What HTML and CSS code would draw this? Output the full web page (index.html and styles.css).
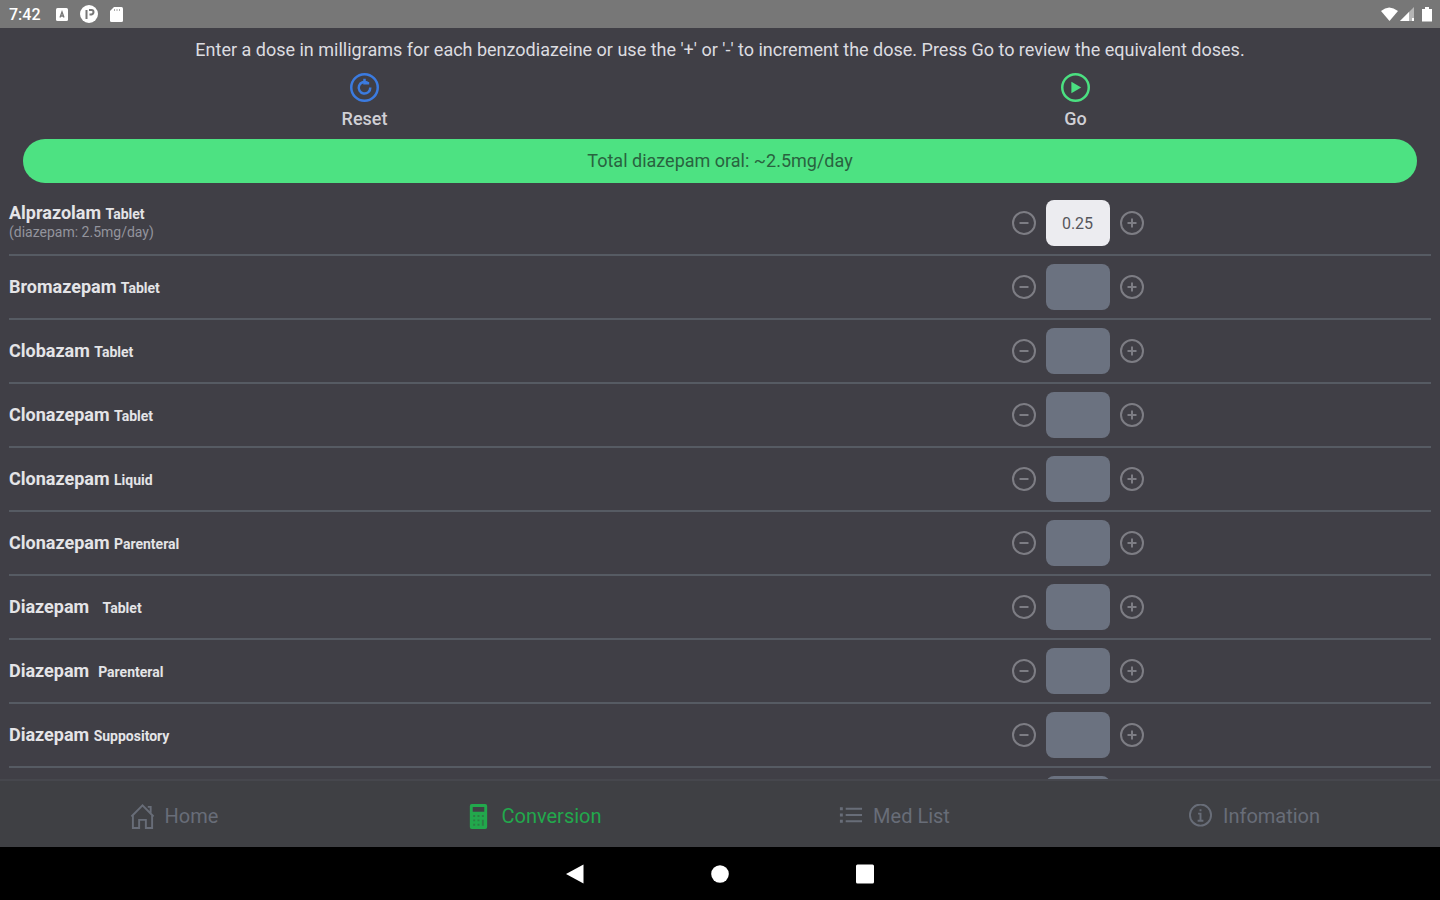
FILE: index.html
```html
<!DOCTYPE html>
<html lang="en">
<head>
<meta charset="utf-8">
<title>Benzodiazepine Conversion</title>
<link rel="stylesheet" href="styles.css">
</head>
<body>
<svg class="defs" aria-hidden="true">
  <symbol id="minus" viewBox="0 0 24 24"><circle cx="12" cy="12" r="11"/><path d="M7.500 12h9"/></symbol>
  <symbol id="plus" viewBox="0 0 24 24"><circle cx="12" cy="12" r="11"/><path d="M7.500 12h9M12 7.500v9"/></symbol>
</svg>
<header class="status">
  <span class="clock">7:42</span>
  <svg class="status-icon" viewBox="0 0 18 18"><rect x="3" y="3" width="12" height="13" rx="1.500" fill="#fff"/><path d="M7 12.500 9 7l2 5.500M7.500 11h3" fill="none" stroke="#777" stroke-width="1.300"/></svg>
  <svg class="status-icon" viewBox="0 0 18 18"><circle cx="9" cy="9" r="9" fill="#fff"/><path d="M6.500 14V5M9 5h2.500q2 0 2 2t-2 2.500H9.500" fill="none" stroke="#777" stroke-width="2"/></svg>
  <svg class="status-icon" viewBox="0 0 18 18"><path d="M7 2h7.500a1.500 1.500 0 0 1 1.500 1.500v12a1.500 1.500 0 0 1-1.500 1.500h-10A1.500 1.500 0 0 1 3 15.500V6z" fill="#fff"/><path d="M7.500 4v2M10 4v2M12.500 4v2" stroke="#aaa"/></svg>
  <svg class="signals" viewBox="0 0 54 18"><path d="M1 6q8-7 17 0l-8.500 10z" fill="#fff"/><path d="M20 16 34 2v14z" fill="#b5b5b5"/><path d="M20 16l9-9v9zM32 13h2v3h-2z" fill="#fff"/><path d="M42 4h3V2h4v2h3v12.500H42z" fill="#fff"/></svg>
</header>
<main class="content">
  <p class="intro">Enter a dose in milligrams for each benzodiazeine or use the '+' or '-' to increment the dose. Press Go to review the equivalent doses.</p>
  <div class="actions">
    <button class="action" type="button">
      <svg class="reset-icon" viewBox="0 0 28 28"><circle cx="14" cy="14" r="12.800"/><path d="M17 9.500A5.600 5.600 0 1 0 19.600 14"/><path d="M14 5.500v4.500h4.500" /></svg>
      <span>Reset</span>
    </button>
    <button class="action" type="button">
      <svg class="go-icon" viewBox="0 0 28 28"><circle cx="14" cy="14" r="12.800"/><path d="M10 8.500v11l9.500-5.500z"/></svg>
      <span>Go</span>
    </button>
  </div>
  <div class="total">Total diazepam oral: ~2.5mg/day</div>
  <ul class="meds">
    <li class="med"><label class="name" for="m1">Alprazolam <small>Tablet</small><span class="equiv">(diazepam: 2.5mg/day)</span></label><div class="dose"><button class="step" type="button" aria-label="Decrease"><svg><use href="#minus"/></svg></button><input class="amount filled" id="m1" value="0.25"><button class="step" type="button" aria-label="Increase"><svg><use href="#plus"/></svg></button></div></li>
    <li class="med"><label class="name" for="m2">Bromazepam <small>Tablet</small></label><div class="dose"><button class="step" type="button" aria-label="Decrease"><svg><use href="#minus"/></svg></button><input class="amount" id="m2"><button class="step" type="button" aria-label="Increase"><svg><use href="#plus"/></svg></button></div></li>
    <li class="med"><label class="name" for="m3">Clobazam <small>Tablet</small></label><div class="dose"><button class="step" type="button" aria-label="Decrease"><svg><use href="#minus"/></svg></button><input class="amount" id="m3"><button class="step" type="button" aria-label="Increase"><svg><use href="#plus"/></svg></button></div></li>
    <li class="med"><label class="name" for="m4">Clonazepam <small>Tablet</small></label><div class="dose"><button class="step" type="button" aria-label="Decrease"><svg><use href="#minus"/></svg></button><input class="amount" id="m4"><button class="step" type="button" aria-label="Increase"><svg><use href="#plus"/></svg></button></div></li>
    <li class="med"><label class="name" for="m5">Clonazepam <small>Liquid</small></label><div class="dose"><button class="step" type="button" aria-label="Decrease"><svg><use href="#minus"/></svg></button><input class="amount" id="m5"><button class="step" type="button" aria-label="Increase"><svg><use href="#plus"/></svg></button></div></li>
    <li class="med"><label class="name" for="m6">Clonazepam <small>Parenteral</small></label><div class="dose"><button class="step" type="button" aria-label="Decrease"><svg><use href="#minus"/></svg></button><input class="amount" id="m6"><button class="step" type="button" aria-label="Increase"><svg><use href="#plus"/></svg></button></div></li>
    <li class="med"><label class="name" for="m7">Diazepam &nbsp; <small>Tablet</small></label><div class="dose"><button class="step" type="button" aria-label="Decrease"><svg><use href="#minus"/></svg></button><input class="amount" id="m7"><button class="step" type="button" aria-label="Increase"><svg><use href="#plus"/></svg></button></div></li>
    <li class="med"><label class="name" for="m8">Diazepam &nbsp;<small>Parenteral</small></label><div class="dose"><button class="step" type="button" aria-label="Decrease"><svg><use href="#minus"/></svg></button><input class="amount" id="m8"><button class="step" type="button" aria-label="Increase"><svg><use href="#plus"/></svg></button></div></li>
    <li class="med"><label class="name" for="m9">Diazepam <small>Suppository</small></label><div class="dose"><button class="step" type="button" aria-label="Decrease"><svg><use href="#minus"/></svg></button><input class="amount" id="m9"><button class="step" type="button" aria-label="Increase"><svg><use href="#plus"/></svg></button></div></li>
    <li class="med"><span class="name"></span><div class="dose"><button class="step" type="button" aria-label="Decrease"><svg><use href="#minus"/></svg></button><input class="amount" aria-label="Dose"><button class="step" type="button" aria-label="Increase"><svg><use href="#plus"/></svg></button></div></li>
  </ul>
</main>
<nav class="tabs">
  <a class="tab" href="#home"><svg viewBox="0 0 26 26"><path d="M1.500 13 13 1.500 24.500 13M3 11.500V25h6.500v-8.500h7V25H23V11.500M18.500 3h3v6"/></svg>Home</a>
  <a class="tab active" href="#conversion"><svg viewBox="0 0 26 26"><path class="solid" fill-rule="evenodd" d="M6 0h14q2 0 2 2v22q0 2-2 2H6q-2 0-2-2V2q0-2 2-2zM7 3v5h12V3z"/><path class="keys" d="M7.500 12.500h2m2.500 0h2m2.500 0h2M7.500 17h2m2.500 0h2M7.500 21.500h2m2.500 0h2m3.500-5v6"/></svg>Conversion</a>
  <a class="tab" href="#list"><svg viewBox="0 0 26 26"><path d="M8 5h17M8 11.500h17M8 18h17"/><path class="dots" d="M2 5h3M2 11.500h3M2 18h3"/></svg>Med List</a>
  <a class="tab" href="#info"><svg viewBox="0 0 26 26"><circle cx="13" cy="11.500" r="11"/><path d="M10.500 10h2.500v7M10 17.500h6M12 6.500h2"/></svg>Infomation</a>
</nav>
<footer class="system">
  <button type="button" aria-label="Back"><svg viewBox="0 0 20 20"><path d="M1 10 18.500 0.500v19z"/></svg></button>
  <button type="button" aria-label="Home"><svg viewBox="0 0 20 20"><circle cx="10" cy="10" r="8.800"/></svg></button>
  <button type="button" aria-label="Recent apps"><svg viewBox="0 0 20 20"><rect x="1" y="0.500" width="18" height="19" rx="1.500"/></svg></button>
</footer>
</body>
</html>
```
FILE: styles.css
```css
* { box-sizing: border-box; }
body {
  margin: 0;
  height: 100vh;
  display: flex;
  flex-direction: column;
  background: #403f46;
  color: #e2e2e6;
  font-family: Roboto, sans-serif;
  font-size: 18px;
}
button { border: 0; padding: 0; background: none; color: inherit; font: inherit; }
svg { display: block; fill: none; }
.defs { position: absolute; width: 0; height: 0; }
.status {
  flex: none;
  height: 28px;
  padding: 0 6px 0 9px;
  display: flex;
  align-items: center;
  gap: 9px;
  background: #777;
  color: #fff;
}
.clock { font-size: 16px; font-weight: 500; margin-right: 3px; }
.status-icon { width: 18px; height: 18px; }
.signals { width: 54px; height: 18px; margin-left: auto; }
.content { flex: 1; min-height: 0; padding: 0 9px; overflow: hidden; }
.intro { margin: 0; padding-top: 10px; line-height: 24px; text-align: center; color: #dcdce0; }
.actions { display: grid; grid-template-columns: 1fr 1fr; padding-top: 11px; }
.action { display: flex; flex-direction: column; align-items: center; gap: 6px; line-height: 22px; font-weight: 500; color: #d0d0d5; }
.action svg { width: 29px; height: 29px; stroke-width: 2.400; }
.reset-icon { stroke: #3b7be0; }
.go-icon { stroke: #4be081; }
.go-icon path { fill: #4be081; stroke: none; }
.total {
  margin: 9px 14px;
  height: 44px;
  line-height: 44px;
  border-radius: 22px;
  background: #4de282;
  color: #29633f;
  text-align: center;
}
.meds { list-style: none; margin: 0; padding: 0; }
.med {
  height: 64px;
  display: grid;
  grid-template-columns: 1fr 1fr;
  align-items: center;
  border-bottom: 2px solid #565b63;
}
.name { font-weight: 700; line-height: 20px; color: #e4e4e7; }
.name small { font-size: 14px; }
.equiv { display: block; margin-bottom: 4px; font-size: 14px; font-weight: 400; line-height: 16px; color: #93949d; }
.dose { display: flex; justify-content: center; align-items: center; gap: 10px; padding-left: 4px; }
.step svg { width: 24px; height: 24px; stroke: #7d7d84; stroke-width: 2; }
.amount {
  width: 64px;
  height: 46px;
  padding: 0;
  border: 0;
  border-radius: 8px;
  background: #6b7280;
  color: #56565c;
  font: inherit;
  font-size: 16px;
  text-align: center;
}
.amount.filled { background: #ececf0; }
.tabs {
  flex: none;
  height: 68px;
  display: grid;
  grid-template-columns: repeat(4, 1fr);
  background: #3f4044;
  border-top: 2px solid #46474d;
}
.tab {
  display: flex;
  align-items: center;
  justify-content: center;
  gap: 10px;
  padding: 4px 12px 0 0;
  color: #686d78;
  font-size: 20px;
  text-decoration: none;
}
.tab svg { width: 25px; height: 25px; stroke: currentColor; stroke-width: 2; }
.tab .dots { stroke-width: 3; }
.tab.active { color: #22a84c; }
.tab .solid { fill: currentColor; stroke: none; }
.tab .keys { stroke: #2c7d45; }
.system {
  flex: none;
  height: 53px;
  display: flex;
  align-items: center;
  justify-content: center;
  gap: 125px;
  background: #000;
}
.system svg { width: 20px; height: 20px; fill: #fff; }
```
